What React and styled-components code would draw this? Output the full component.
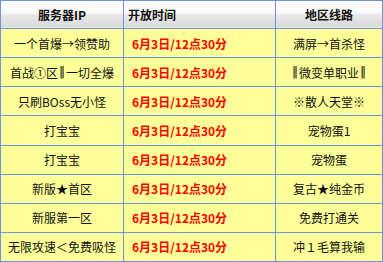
import React from "react";
import styled, { createGlobalStyle } from "styled-components";

const Global = createGlobalStyle`
  html, body { margin: 0; padding: 0; background: #fff; }
  body { font-family: "Noto Sans CJK SC", "Noto Sans", sans-serif; }
`;

const Table = styled.div`
  display: grid;
  grid-template-columns: 122px 151px 106px;
  grid-template-rows: 27px repeat(8, 1fr);
  gap: 1px;
  padding: 1px;
  width: 381px;
  height: 260px;
  background: #6f93dc;
`;

const HeadCell = styled.div`
  display: flex;
  align-items: center;
  justify-content: ${(p) => (p.$left ? "flex-start" : "center")};
  padding-left: ${(p) => (p.$left ? "4px" : "0")};
  background: linear-gradient(
    to bottom,
    #ffffff 0%,
    #fbfbfb 42%,
    #e8e8e8 52%,
    #dadada 94%,
    #eef0f6 100%
  );
  font-size: 12px;
  font-weight: bold;
  color: #111;
  white-space: nowrap;
`;

const Cell = styled.div`
  display: flex;
  align-items: center;
  justify-content: ${(p) => (p.$red ? "flex-start" : "center")};
  padding-left: ${(p) => (p.$red ? "8px" : "0")};
  background: #ffff99;
  font-size: 12px;
  font-weight: ${(p) => (p.$red ? "bold" : "normal")};
  color: ${(p) => (p.$red ? "#ff0000" : "#111")};
  white-space: nowrap;
  overflow: hidden;
`;

const Bar = styled.span`
  font-family: "DejaVu Sans", sans-serif;
  font-size: 12px;
  color: #111;
  margin: 0 1px;
`;

const withBars = (text) =>
  text.split("‖").flatMap((part, i) =>
    i === 0 ? [part] : [<Bar key={i}>‖</Bar>, part]
  );

const rows = [
  ["一个首爆→领赞助", "满屏→首杀怪"],
  ["首战①区‖一切全爆", "‖微变单职业‖"],
  ["只刷BOss无小怪", "※散人天堂※"],
  ["打宝宝", "宠物蛋1"],
  ["打宝宝", "宠物蛋"],
  ["新版★首区", "复古★纯金币"],
  ["新服第一区", "免费打通关"],
  ["无限攻速＜免费吸怪", "冲１毛算我输"],
];

export default function App() {
  return (
    <>
      <Global />
      <Table>
        <HeadCell>服务器IP</HeadCell>
        <HeadCell $left>开放时间</HeadCell>
        <HeadCell>地区线路</HeadCell>
        {rows.map(([name, line], i) => (
          <React.Fragment key={i}>
            <Cell>{withBars(name)}</Cell>
            <Cell $red>6月3日/12点30分</Cell>
            <Cell>{withBars(line)}</Cell>
          </React.Fragment>
        ))}
      </Table>
    </>
  );
}
